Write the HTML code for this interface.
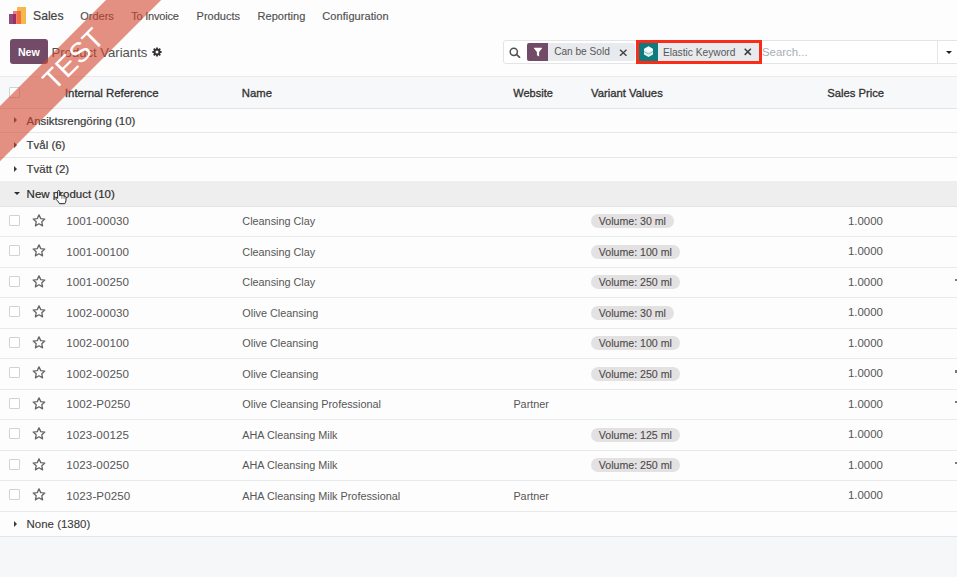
<!DOCTYPE html>
<html><head><meta charset="utf-8"><style>
html,body{margin:0;padding:0;}
body{width:957px;height:577px;overflow:hidden;position:relative;background:#fdfdfd;font-family:"Liberation Sans",sans-serif;}
.t{position:absolute;line-height:1;white-space:nowrap;}
.lg{position:absolute;}
.logo{position:absolute;left:8px;top:6.8px;width:18px;height:17px;}
.logo i{position:absolute;bottom:0;display:block;}
.logo .b3{left:9.7px;width:8px;height:16.8px;background:#f7b733;}
.logo .b2{left:5.2px;width:7.6px;height:13px;background:#ee6a53;}
.logo .b1{left:0.3px;width:7.7px;height:9.8px;background:#8b3a6a;}
.btn-new{position:absolute;left:9.5px;top:39.2px;width:38.3px;height:24.8px;border-radius:3px;background:#714b67;}
.search{position:absolute;left:502.5px;top:39.6px;width:470px;height:24.4px;border:1px solid #e2e4e6;border-radius:3px;background:#fff;box-sizing:border-box;}
.facet-ic{position:absolute;top:43.2px;height:17.5px;border-radius:2px 0 0 2px;}
.facet-bd{position:absolute;top:43.2px;height:17.5px;background:#e8eaed;border-radius:0 2px 2px 0;}
.redbox{position:absolute;left:635.5px;top:40.4px;width:126px;height:24.1px;border:3px solid #f92c18;box-sizing:border-box;}
.cb{position:absolute;width:11px;height:11px;border:1px solid #d2d2d2;border-radius:1px;box-sizing:border-box;background:#fff;}
.badge{position:absolute;left:591px;height:14px;line-height:14.5px;padding:0 7.8px;border-radius:7px;background:#e4e1e2;color:#4a4a4a;font-size:10.6px;white-space:nowrap;-webkit-text-stroke:0.1px #4a4a4a;}
.ribbon{position:absolute;left:-126.5px;top:39.5px;width:400px;height:38.5px;transform:rotate(-45deg);background:rgba(210,70,46,0.6);text-align:center;}
.ribbon span{display:block;font-size:28px;line-height:38.5px;color:#fff;letter-spacing:0.5px;}
</style></head><body>
<div class="lg" style="left:17.3px;top:7.1px;width:8.4px;height:16.5px;background:#f6b74c"></div><div class="lg" style="left:13px;top:11.1px;width:8.1px;height:12.5px;background:#ef7d78"></div><div class="lg" style="left:17.3px;top:11.1px;width:3.8px;height:12.5px;background:#f36f3c"></div><div class="lg" style="left:8.6px;top:14px;width:7.5px;height:9.6px;background:#8e4b7f"></div><div class="lg" style="left:13px;top:14px;width:3.1px;height:9.6px;background:#9c2f62"></div>
<div class="t" style="left:33.00px;top:10.27px;font-size:12.2px;color:#444444;font-weight:normal;-webkit-text-stroke:0.2px #444">Sales</div>
<div class="t" style="left:80.20px;top:10.69px;font-size:11px;color:#4f4f4f;font-weight:normal;-webkit-text-stroke:0.15px #4f4f4f">Orders</div>
<div class="t" style="left:131.20px;top:10.69px;font-size:11px;color:#4f4f4f;font-weight:normal;letter-spacing:-0.2px;-webkit-text-stroke:0.15px #4f4f4f">To Invoice</div>
<div class="t" style="left:196.60px;top:10.59px;font-size:11px;color:#4f4f4f;font-weight:normal;-webkit-text-stroke:0.15px #4f4f4f">Products</div>
<div class="t" style="left:257.60px;top:10.59px;font-size:11px;color:#4f4f4f;font-weight:normal;-webkit-text-stroke:0.15px #4f4f4f">Reporting</div>
<div class="t" style="left:322.30px;top:10.59px;font-size:11px;color:#4f4f4f;font-weight:normal;letter-spacing:0.08px;-webkit-text-stroke:0.15px #4f4f4f">Configuration</div>
<div class="btn-new"></div>
<div class="t" style="left:17.90px;top:47.24px;font-size:10.7px;color:#ffffff;font-weight:bold;">New</div>
<div class="t" style="left:51.50px;top:45.91px;font-size:13.1px;color:#4f4f4f;font-weight:normal;">Product Variants</div>
<svg style="position:absolute;left:152.1px;top:47.2px" width="10" height="10" viewBox="0 0 10 10"><path fill-rule="evenodd" fill="#333" d="M8.23 3.66 L8.38 4.09 L9.61 4.10 L9.61 5.90 L8.38 5.91 L8.23 6.34 L8.03 6.75 L8.90 7.63 L7.63 8.90 L6.75 8.03 L6.34 8.23 L5.91 8.38 L5.90 9.61 L4.10 9.61 L4.09 8.38 L3.66 8.23 L3.25 8.03 L2.37 8.90 L1.10 7.63 L1.97 6.75 L1.77 6.34 L1.62 5.91 L0.39 5.90 L0.39 4.10 L1.62 4.09 L1.77 3.66 L1.97 3.25 L1.10 2.37 L2.37 1.10 L3.25 1.97 L3.66 1.77 L4.09 1.62 L4.10 0.39 L5.90 0.39 L5.91 1.62 L6.34 1.77 L6.75 1.97 L7.63 1.10 L8.90 2.37 L8.03 3.25 Z M6.5 5 A1.5 1.5 0 1 0 3.5 5 A1.5 1.5 0 1 0 6.5 5 Z"/></svg>
<div class="search"></div>
<svg style="position:absolute;left:509px;top:47px" width="12" height="11" viewBox="0 0 12 11"><circle cx="4.8" cy="4.8" r="3.6" fill="none" stroke="#4f4f4f" stroke-width="1.5"/><path d="M7.5 7.4 L10.6 10.3" stroke="#4f4f4f" stroke-width="1.6" stroke-linecap="round"/></svg>
<div class="facet-ic" style="left:527px;width:21.4px;background:#714b67"></div><div class="facet-bd" style="left:548.4px;width:86.3px"></div>
<svg style="position:absolute;left:533px;top:47.3px" width="10" height="10.5" viewBox="0 0 10 10.5"><path d="M0.9 1.2 Q0.6 0.8 1.2 0.8 H8.8 Q9.4 0.8 9.1 1.2 L6.1 5 V9.6 L3.9 8.3 V5 Z" fill="#fff"/></svg>
<div class="t" style="left:554.20px;top:47.45px;font-size:10.1px;color:#575757;font-weight:normal;">Can be Sold</div>
<svg style="position:absolute;left:618.5px;top:48.5px" width="8.5" height="7.5" viewBox="0 0 8.5 7.5"><path d="M1 0.7 L7.5 6.8 M7.5 0.7 L1 6.8" stroke="#444444" stroke-width="1.4"/></svg>
<div class="redbox"></div>
<div class="facet-ic" style="left:638.5px;top:43.4px;height:17.6px;width:19px;background:#0e7c7f;border-radius:0"></div><div class="facet-bd" style="left:657.5px;top:43.4px;height:17.6px;width:101px;border-radius:0"></div>
<svg style="position:absolute;left:642.5px;top:46px" width="11" height="11.5" viewBox="0 0 11 11.5"><path d="M5.5 0.3 L10 2.9 L10 8.4 L5.5 11 L1 8.4 L1 2.9 Z" fill="#e6f4f4"/><path d="M5.5 0.6 L9.8 3 L5.5 5.5 L1.2 3 Z" fill="#ffffff"/><path d="M1.2 5.6 L5.5 8 L9.8 5.6" fill="none" stroke="#5fa8aa" stroke-width="0.8"/></svg>
<div class="t" style="left:662.90px;top:47.57px;font-size:10.2px;color:#575757;font-weight:normal;">Elastic Keyword</div>
<svg style="position:absolute;left:744.3px;top:48.3px" width="7.6" height="7.6" viewBox="0 0 7.6 7.6"><path d="M0.7 0.7 L6.9 6.9 M6.9 0.7 L0.7 6.9" stroke="#3d3d3d" stroke-width="1.5"/></svg>
<div class="t" style="left:762.00px;top:46.85px;font-size:11.4px;color:#a9aeb3;font-weight:normal;">Search...</div>
<div style="position:absolute;left:937.4px;top:40px;width:1px;height:23.5px;background:#e4e6e8"></div>
<div style="position:absolute;left:945.8px;top:50.5px;width:0;height:0;border-left:3.2px solid transparent;border-right:3.2px solid transparent;border-top:3.5px solid #222"></div>
<div style="position:absolute;left:0;top:76px;width:957px;height:32.5px;background:#f7f8fa;border-top:1px solid #e9eaec;border-bottom:1px solid #e3e4e6;box-sizing:border-box"></div>
<div class="cb" style="left:8.8px;top:87px"></div>
<div class="t" style="left:64.90px;top:87.75px;font-size:11.4px;color:#333333;font-weight:normal;-webkit-text-stroke:0.32px #333333">Internal Reference</div>
<div class="t" style="left:241.80px;top:87.83px;font-size:11.3px;color:#333333;font-weight:normal;-webkit-text-stroke:0.32px #333333">Name</div>
<div class="t" style="left:513.30px;top:88.09px;font-size:11.0px;color:#333333;font-weight:normal;-webkit-text-stroke:0.32px #333333">Website</div>
<div class="t" style="left:591.00px;top:87.83px;font-size:11.3px;color:#333333;font-weight:normal;-webkit-text-stroke:0.32px #333333">Variant Values</div>
<div class="t" style="left:827.20px;top:87.88px;font-size:11.25px;color:#333333;font-weight:normal;-webkit-text-stroke:0.32px #333333">Sales Price</div>
<div style="position:absolute;left:13.8px;top:117.3px;width:0;height:0;border-top:3px solid transparent;border-bottom:3px solid transparent;border-left:3.8px solid #3a3a3a"></div>
<div class="t" style="left:26.60px;top:115.61px;font-size:11.45px;color:#3a3a3a;font-weight:normal;-webkit-text-stroke:0.2px #3a3a3a">Ansiktsrengöring (10)</div>
<div style="position:absolute;left:0;top:132.10px;width:957px;height:1px;background:#e6e7e9"></div>
<div style="position:absolute;left:13.8px;top:141.8px;width:0;height:0;border-top:3px solid transparent;border-bottom:3px solid transparent;border-left:3.8px solid #3a3a3a"></div>
<div class="t" style="left:26.60px;top:140.11px;font-size:11.45px;color:#3a3a3a;font-weight:normal;-webkit-text-stroke:0.2px #3a3a3a">Tvål (6)</div>
<div style="position:absolute;left:0;top:156.50px;width:957px;height:1px;background:#e6e7e9"></div>
<div style="position:absolute;left:13.8px;top:166.15px;width:0;height:0;border-top:3px solid transparent;border-bottom:3px solid transparent;border-left:3.8px solid #3a3a3a"></div>
<div class="t" style="left:26.60px;top:164.46px;font-size:11.45px;color:#3a3a3a;font-weight:normal;-webkit-text-stroke:0.2px #3a3a3a">Tvätt (2)</div>
<div style="position:absolute;left:0;top:180.80px;width:957px;height:1px;background:#e6e7e9"></div>
<div style="position:absolute;left:0;top:181.3px;width:957px;height:25px;background:#eeeeef"></div>
<div style="position:absolute;left:13.5px;top:192.4px;width:0;height:0;border-left:3.2px solid transparent;border-right:3.2px solid transparent;border-top:3.6px solid #2b2f33"></div>
<div class="t" style="left:26.60px;top:188.77px;font-size:11.5px;color:#2e2e2e;font-weight:normal;-webkit-text-stroke:0.2px #2e2e2e">New product (10)</div>
<div style="position:absolute;left:0;top:205.90px;width:957px;height:1px;background:#e2e3e5"></div>
<div class="cb" style="left:9px;top:214.80px"></div>
<svg style="position:absolute;left:31.6px;top:213.50px" width="14" height="13" viewBox="0 0 14 13"><path d="M7 0.9 L8.75 4.6 L12.8 5.05 L9.8 7.8 L10.6 11.85 L7 9.8 L3.4 11.85 L4.2 7.8 L1.2 5.05 L5.25 4.6 Z" fill="none" stroke="#666666" stroke-width="1.3" stroke-linejoin="round"/></svg>
<div class="t" style="left:66.20px;top:215.38px;font-size:11.6px;color:#565656;font-weight:normal;letter-spacing:0.1px">1001-00030</div>
<div class="t" style="left:242.30px;top:216.02px;font-size:10.85px;color:#565656;font-weight:normal;">Cleansing Clay</div>
<div class="badge" style="top:214.40px">Volume: 30 ml</div>
<div class="t" style="left:847.90px;top:215.81px;font-size:11.45px;color:#565656;font-weight:normal;">1.0000</div>
<div style="position:absolute;left:0;top:236.30px;width:957px;height:1px;background:#e8e9eb"></div>
<div class="cb" style="left:9px;top:245.30px"></div>
<svg style="position:absolute;left:31.6px;top:244.00px" width="14" height="13" viewBox="0 0 14 13"><path d="M7 0.9 L8.75 4.6 L12.8 5.05 L9.8 7.8 L10.6 11.85 L7 9.8 L3.4 11.85 L4.2 7.8 L1.2 5.05 L5.25 4.6 Z" fill="none" stroke="#666666" stroke-width="1.3" stroke-linejoin="round"/></svg>
<div class="t" style="left:66.20px;top:245.88px;font-size:11.6px;color:#565656;font-weight:normal;letter-spacing:0.1px">1001-00100</div>
<div class="t" style="left:242.30px;top:246.52px;font-size:10.85px;color:#565656;font-weight:normal;">Cleansing Clay</div>
<div class="badge" style="top:244.90px">Volume: 100 ml</div>
<div class="t" style="left:847.90px;top:246.31px;font-size:11.45px;color:#565656;font-weight:normal;">1.0000</div>
<div style="position:absolute;left:0;top:266.80px;width:957px;height:1px;background:#e8e9eb"></div>
<div class="cb" style="left:9px;top:275.80px"></div>
<svg style="position:absolute;left:31.6px;top:274.50px" width="14" height="13" viewBox="0 0 14 13"><path d="M7 0.9 L8.75 4.6 L12.8 5.05 L9.8 7.8 L10.6 11.85 L7 9.8 L3.4 11.85 L4.2 7.8 L1.2 5.05 L5.25 4.6 Z" fill="none" stroke="#666666" stroke-width="1.3" stroke-linejoin="round"/></svg>
<div class="t" style="left:66.20px;top:276.38px;font-size:11.6px;color:#565656;font-weight:normal;letter-spacing:0.1px">1001-00250</div>
<div class="t" style="left:242.30px;top:277.02px;font-size:10.85px;color:#565656;font-weight:normal;">Cleansing Clay</div>
<div class="badge" style="top:275.40px">Volume: 250 ml</div>
<div class="t" style="left:847.90px;top:276.81px;font-size:11.45px;color:#565656;font-weight:normal;">1.0000</div>
<div style="position:absolute;left:954.5px;top:278.50px;width:2.5px;height:2.5px;background:#777"></div>
<div style="position:absolute;left:0;top:297.30px;width:957px;height:1px;background:#e8e9eb"></div>
<div class="cb" style="left:9px;top:306.30px"></div>
<svg style="position:absolute;left:31.6px;top:305.00px" width="14" height="13" viewBox="0 0 14 13"><path d="M7 0.9 L8.75 4.6 L12.8 5.05 L9.8 7.8 L10.6 11.85 L7 9.8 L3.4 11.85 L4.2 7.8 L1.2 5.05 L5.25 4.6 Z" fill="none" stroke="#666666" stroke-width="1.3" stroke-linejoin="round"/></svg>
<div class="t" style="left:66.20px;top:306.88px;font-size:11.6px;color:#565656;font-weight:normal;letter-spacing:0.1px">1002-00030</div>
<div class="t" style="left:242.30px;top:307.52px;font-size:10.85px;color:#565656;font-weight:normal;">Olive Cleansing</div>
<div class="badge" style="top:305.90px">Volume: 30 ml</div>
<div class="t" style="left:847.90px;top:307.31px;font-size:11.45px;color:#565656;font-weight:normal;">1.0000</div>
<div style="position:absolute;left:0;top:327.80px;width:957px;height:1px;background:#e8e9eb"></div>
<div class="cb" style="left:9px;top:336.80px"></div>
<svg style="position:absolute;left:31.6px;top:335.50px" width="14" height="13" viewBox="0 0 14 13"><path d="M7 0.9 L8.75 4.6 L12.8 5.05 L9.8 7.8 L10.6 11.85 L7 9.8 L3.4 11.85 L4.2 7.8 L1.2 5.05 L5.25 4.6 Z" fill="none" stroke="#666666" stroke-width="1.3" stroke-linejoin="round"/></svg>
<div class="t" style="left:66.20px;top:337.38px;font-size:11.6px;color:#565656;font-weight:normal;letter-spacing:0.1px">1002-00100</div>
<div class="t" style="left:242.30px;top:338.02px;font-size:10.85px;color:#565656;font-weight:normal;">Olive Cleansing</div>
<div class="badge" style="top:336.40px">Volume: 100 ml</div>
<div class="t" style="left:847.90px;top:337.81px;font-size:11.45px;color:#565656;font-weight:normal;">1.0000</div>
<div style="position:absolute;left:0;top:358.30px;width:957px;height:1px;background:#e8e9eb"></div>
<div class="cb" style="left:9px;top:367.30px"></div>
<svg style="position:absolute;left:31.6px;top:366.00px" width="14" height="13" viewBox="0 0 14 13"><path d="M7 0.9 L8.75 4.6 L12.8 5.05 L9.8 7.8 L10.6 11.85 L7 9.8 L3.4 11.85 L4.2 7.8 L1.2 5.05 L5.25 4.6 Z" fill="none" stroke="#666666" stroke-width="1.3" stroke-linejoin="round"/></svg>
<div class="t" style="left:66.20px;top:367.88px;font-size:11.6px;color:#565656;font-weight:normal;letter-spacing:0.1px">1002-00250</div>
<div class="t" style="left:242.30px;top:368.52px;font-size:10.85px;color:#565656;font-weight:normal;">Olive Cleansing</div>
<div class="badge" style="top:366.90px">Volume: 250 ml</div>
<div class="t" style="left:847.90px;top:368.31px;font-size:11.45px;color:#565656;font-weight:normal;">1.0000</div>
<div style="position:absolute;left:954.5px;top:370.00px;width:2.5px;height:2.5px;background:#777"></div>
<div style="position:absolute;left:0;top:388.80px;width:957px;height:1px;background:#e8e9eb"></div>
<div class="cb" style="left:9px;top:397.80px"></div>
<svg style="position:absolute;left:31.6px;top:396.50px" width="14" height="13" viewBox="0 0 14 13"><path d="M7 0.9 L8.75 4.6 L12.8 5.05 L9.8 7.8 L10.6 11.85 L7 9.8 L3.4 11.85 L4.2 7.8 L1.2 5.05 L5.25 4.6 Z" fill="none" stroke="#666666" stroke-width="1.3" stroke-linejoin="round"/></svg>
<div class="t" style="left:66.20px;top:398.38px;font-size:11.6px;color:#565656;font-weight:normal;letter-spacing:0.1px">1002-P0250</div>
<div class="t" style="left:242.30px;top:399.02px;font-size:10.85px;color:#565656;font-weight:normal;">Olive Cleansing Professional</div>
<div class="t" style="left:513.40px;top:399.02px;font-size:10.85px;color:#565656;font-weight:normal;">Partner</div>
<div class="t" style="left:847.90px;top:398.81px;font-size:11.45px;color:#565656;font-weight:normal;">1.0000</div>
<div style="position:absolute;left:954.5px;top:400.50px;width:2.5px;height:2.5px;background:#777"></div>
<div style="position:absolute;left:0;top:419.30px;width:957px;height:1px;background:#e8e9eb"></div>
<div class="cb" style="left:9px;top:428.30px"></div>
<svg style="position:absolute;left:31.6px;top:427.00px" width="14" height="13" viewBox="0 0 14 13"><path d="M7 0.9 L8.75 4.6 L12.8 5.05 L9.8 7.8 L10.6 11.85 L7 9.8 L3.4 11.85 L4.2 7.8 L1.2 5.05 L5.25 4.6 Z" fill="none" stroke="#666666" stroke-width="1.3" stroke-linejoin="round"/></svg>
<div class="t" style="left:66.20px;top:428.88px;font-size:11.6px;color:#565656;font-weight:normal;letter-spacing:0.1px">1023-00125</div>
<div class="t" style="left:242.30px;top:429.52px;font-size:10.85px;color:#565656;font-weight:normal;">AHA Cleansing Milk</div>
<div class="badge" style="top:427.90px">Volume: 125 ml</div>
<div class="t" style="left:847.90px;top:429.31px;font-size:11.45px;color:#565656;font-weight:normal;">1.0000</div>
<div style="position:absolute;left:0;top:449.80px;width:957px;height:1px;background:#e8e9eb"></div>
<div class="cb" style="left:9px;top:458.80px"></div>
<svg style="position:absolute;left:31.6px;top:457.50px" width="14" height="13" viewBox="0 0 14 13"><path d="M7 0.9 L8.75 4.6 L12.8 5.05 L9.8 7.8 L10.6 11.85 L7 9.8 L3.4 11.85 L4.2 7.8 L1.2 5.05 L5.25 4.6 Z" fill="none" stroke="#666666" stroke-width="1.3" stroke-linejoin="round"/></svg>
<div class="t" style="left:66.20px;top:459.38px;font-size:11.6px;color:#565656;font-weight:normal;letter-spacing:0.1px">1023-00250</div>
<div class="t" style="left:242.30px;top:460.02px;font-size:10.85px;color:#565656;font-weight:normal;">AHA Cleansing Milk</div>
<div class="badge" style="top:458.40px">Volume: 250 ml</div>
<div class="t" style="left:847.90px;top:459.81px;font-size:11.45px;color:#565656;font-weight:normal;">1.0000</div>
<div style="position:absolute;left:954.5px;top:461.50px;width:2.5px;height:2.5px;background:#777"></div>
<div style="position:absolute;left:0;top:480.30px;width:957px;height:1px;background:#e8e9eb"></div>
<div class="cb" style="left:9px;top:489.30px"></div>
<svg style="position:absolute;left:31.6px;top:488.00px" width="14" height="13" viewBox="0 0 14 13"><path d="M7 0.9 L8.75 4.6 L12.8 5.05 L9.8 7.8 L10.6 11.85 L7 9.8 L3.4 11.85 L4.2 7.8 L1.2 5.05 L5.25 4.6 Z" fill="none" stroke="#666666" stroke-width="1.3" stroke-linejoin="round"/></svg>
<div class="t" style="left:66.20px;top:489.88px;font-size:11.6px;color:#565656;font-weight:normal;letter-spacing:0.1px">1023-P0250</div>
<div class="t" style="left:242.30px;top:490.52px;font-size:10.85px;color:#565656;font-weight:normal;">AHA Cleansing Milk Professional</div>
<div class="t" style="left:513.40px;top:490.52px;font-size:10.85px;color:#565656;font-weight:normal;">Partner</div>
<div class="t" style="left:847.90px;top:490.31px;font-size:11.45px;color:#565656;font-weight:normal;">1.0000</div>
<div style="position:absolute;left:0;top:510.80px;width:957px;height:1px;background:#e8e9eb"></div>
<div style="position:absolute;left:13.8px;top:521.2px;width:0;height:0;border-top:3px solid transparent;border-bottom:3px solid transparent;border-left:3.8px solid #3a3a3a"></div>
<div class="t" style="left:26.60px;top:518.50px;font-size:11.46px;color:#3a3a3a;font-weight:normal;-webkit-text-stroke:0.1px #3a3a3a">None (1380)</div>
<div style="position:absolute;left:0;top:536px;width:957px;height:41px;background:#f6f7f9;border-top:1px solid #e4e5e7;box-sizing:border-box"></div>
<svg style="position:absolute;left:54.6px;top:190.3px" width="12" height="15" viewBox="0 0 12 15"><path d="M2.7 1.2 C2.7 0.2 4.7 0.2 4.7 1.2 L4.7 5.8 C5.3 5.2 6.5 5.2 6.9 6 C7.5 5.4 8.7 5.5 9.1 6.4 C9.7 6 10.9 6.2 11 7.2 L11 10.2 C11 11.7 10.3 12.7 9.8 13.7 L4.5 13.7 C4 12.7 3 11.2 1.3 9.5 C0.5 8.7 1.3 7.5 2.3 8 L2.7 8.4 Z" fill="#fff" stroke="#222" stroke-width="1" stroke-linejoin="round"/><path d="M6.9 6.2 V8.8 M9.1 6.6 V8.8" stroke="#222" stroke-width="0.6"/></svg>
<div class="ribbon"><span>TEST</span></div>
</body></html>
